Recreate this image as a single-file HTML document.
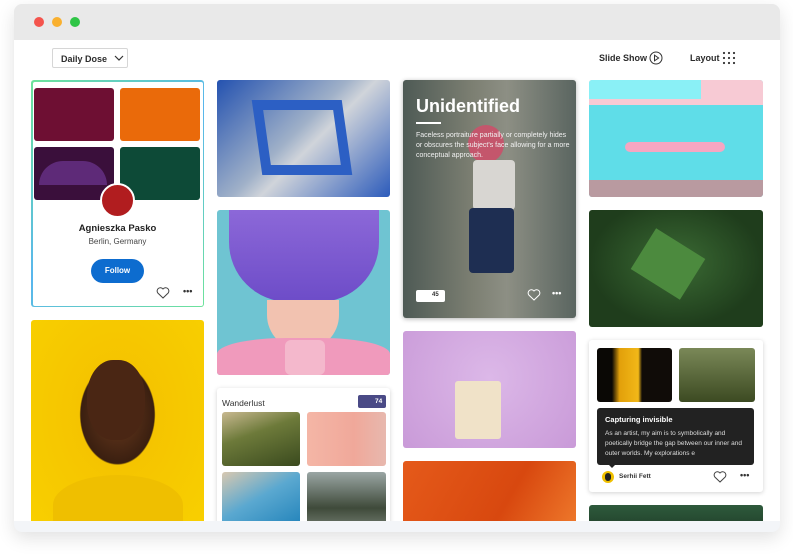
<!DOCTYPE html>
<html><head><style>
*{margin:0;padding:0;box-sizing:border-box}
body{width:793px;height:556px;background:#fff;font-family:"Liberation Sans",sans-serif;position:relative;overflow:hidden}
.win{position:absolute;left:14px;top:4px;width:766px;height:528px;border-radius:8px;background:#f3f5f8;box-shadow:0 6px 18px rgba(0,0,0,.12);overflow:hidden}
.bar{position:absolute;left:0;top:0;width:100%;height:36px;background:#e9e9e9}
.dot{position:absolute;top:13px;width:10px;height:10px;border-radius:50%}
.content{position:absolute;left:0;top:36px;width:766px;height:481px;background:#fff;overflow:hidden}
.a{position:absolute}
.img{position:absolute;border-radius:3px;overflow:hidden}
.card{position:absolute;background:#fff;border-radius:3px;box-shadow:0 1px 5px rgba(0,0,0,.18)}
</style></head><body>
<div class="win">
<div class="bar"><div class="dot" style="left:20px;background:#f4544d"></div><div class="dot" style="left:38px;background:#f9b02f"></div><div class="dot" style="left:56px;background:#2fc546"></div></div>
<div class="content">
<!-- toolbar (content coords: x-14, y-40) -->
<div class="a" style="left:38px;top:8px;width:76px;height:20px;border:1px solid #d6d6d6;border-radius:2px;font-size:9px;font-weight:bold;color:#2c2c2c;padding:5px 0 0 8px">Daily Dose <svg width="10" height="7" style="margin-left:4px" viewBox="0 0 10 7"><path d="M1 1l4 4 4-4" fill="none" stroke="#333" stroke-width="1.2"/></svg></div>
<div class="a" style="left:585px;top:13px;font-size:9px;font-weight:bold;color:#2c2c2c">Slide Show</div>
<svg class="a" style="left:635px;top:11px" width="14" height="14" viewBox="0 0 14 14"><circle cx="7" cy="7" r="6" fill="none" stroke="#333" stroke-width="1"/><path d="M5.5 4.2v5.6L9.6 7z" fill="none" stroke="#333"/></svg>
<div class="a" style="left:676px;top:13px;font-size:9px;font-weight:bold;color:#2c2c2c">Layout</div>
<svg class="a" style="left:708px;top:11px" width="14" height="14" viewBox="0 0 14 14" fill="#333"><circle cx="2" cy="2" r="1.1"/><circle cx="7" cy="2" r="1.1"/><circle cx="12" cy="2" r="1.1"/><circle cx="2" cy="7" r="1.1"/><circle cx="7" cy="7" r="1.1"/><circle cx="12" cy="7" r="1.1"/><circle cx="2" cy="12" r="1.1"/><circle cx="7" cy="12" r="1.1"/><circle cx="12" cy="12" r="1.1"/></svg>

<!-- col1 profile card -->
<div class="a" style="left:17px;top:40px;width:173px;height:227px;border-radius:3px;background:linear-gradient(135deg,#6de39a,#58b6ee 50%,#6de39a);padding:1.5px"><div style="width:100%;height:100%;background:#fff;border-radius:2px"></div></div>
<div class="img" style="left:20px;top:48px;width:80px;height:53px;background:#6e0f33"></div>
<div class="img" style="left:106px;top:48px;width:80px;height:53px;background:#ea6a0a"></div>
<div class="img" style="left:20px;top:107px;width:80px;height:53px;background:#3a0f3b"><div style="position:absolute;left:5px;top:14px;width:68px;height:24px;border-radius:34px 34px 0 0;background:#5e2a78"></div></div>
<div class="img" style="left:106px;top:107px;width:80px;height:53px;background:#0d4a37"></div>
<div class="a" style="left:86px;top:143px;width:35px;height:35px;border-radius:50%;background:#b11d1f;border:2px solid #fff"></div>
<div class="a" style="left:17px;top:183px;width:173px;text-align:center;font-size:9.5px;font-weight:bold;color:#222">Agnieszka Pasko</div>
<div class="a" style="left:17px;top:197px;width:173px;text-align:center;font-size:8px;color:#444">Berlin, Germany</div>
<div class="a" style="left:77px;top:219px;width:53px;height:24px;border-radius:12px;background:#0d6ccf;color:#fff;font-size:8px;font-weight:bold;text-align:center;line-height:24px">Follow</div>
<svg class="a" style="left:142px;top:247px" width="14" height="12" viewBox="0 0 14 12"><path d="M7 11L1.8 6A3 3 0 0 1 7 2a3 3 0 0 1 5.2 4z" fill="none" stroke="#444" stroke-width="1"/></svg>
<div class="a" style="left:169px;top:246px;font-size:9px;font-weight:bold;color:#333">•••</div>
<div class="img" style="left:17px;top:280px;width:173px;height:210px;background:radial-gradient(ellipse at 50% 45%,#6a3a1e 0,#3a1f10 30%,#f5c400 31%,#f8d000 100%)"><div style="position:absolute;left:56px;top:40px;width:58px;height:80px;border-radius:45%;background:#4a2614"></div><div style="position:absolute;left:22px;top:155px;width:130px;height:60px;background:#efbf00;border-radius:50% 50% 0 0"></div></div>

<!-- col2 -->
<div class="img" style="left:203px;top:40px;width:173px;height:117px;background:linear-gradient(135deg,#2452b0,#9fb0c8 45%,#d0d4da 55%,#2c5bbb)"><div style="position:absolute;left:40px;top:20px;width:90px;height:75px;border:10px solid #2c5fc4;transform:skew(8deg)"></div></div>
<div class="img" style="left:203px;top:170px;width:173px;height:165px;background:#6fc4d2"><div style="position:absolute;left:12px;top:0;width:150px;height:92px;border-radius:0 0 60px 60px;background:linear-gradient(#8c68d8,#6d4cc8)"></div><div style="position:absolute;left:50px;top:90px;width:72px;height:50px;background:#f2c2b0;border-radius:0 0 35px 35px"></div><div style="position:absolute;left:0;top:128px;width:173px;height:40px;background:#f09abc;border-radius:40% 40% 0 0"></div><div style="position:absolute;left:68px;top:130px;width:40px;height:35px;background:#f4b8cc;border-radius:6px"></div></div>
<div class="card" style="left:203px;top:348px;width:173px;height:150px">
<div class="a" style="left:5px;top:10px;font-size:8.5px;color:#333">Wanderlust</div>
<div class="a" style="left:141px;top:7px;width:28px;height:13px;background:#4a4a86;border-radius:2px;color:#fff;font-size:6.5px;font-weight:bold;padding:3px 0 0 17px">74</div>
<div class="img" style="left:5px;top:24px;width:78px;height:54px;background:linear-gradient(160deg,#c8b890,#6d7a3a 40%,#3a4a1e)"></div>
<div class="img" style="left:90px;top:24px;width:79px;height:54px;background:linear-gradient(90deg,#f4b6a6,#f0a89a 60%,#e7b8ae)"></div>
<div class="img" style="left:5px;top:84px;width:78px;height:60px;background:linear-gradient(150deg,#d8c8b0,#5aa8d0 45%,#1c7fb8)"></div>
<div class="img" style="left:90px;top:84px;width:79px;height:60px;background:linear-gradient(#9aa6a4,#3f4a3a 60%,#7a8478)"></div>
</div>

<!-- col3 -->
<div class="img" style="left:389px;top:40px;width:173px;height:238px;background:linear-gradient(90deg,#4e5a55,#7c7f72 40%,#8d8f84 60%,#5a6560);box-shadow:0 1px 5px rgba(0,0,0,.3)">
<div style="position:absolute;left:65px;top:45px;width:36px;height:38px;border-radius:50%;background:#c4566c"></div>
<div style="position:absolute;left:70px;top:80px;width:42px;height:50px;background:#d8d6d2;border-radius:4px"></div>
<div style="position:absolute;left:66px;top:128px;width:45px;height:65px;background:#1e2e52;border-radius:4px"></div>
<div style="position:absolute;left:13px;top:16px;font-size:18px;font-weight:bold;color:#fff">Unidentified</div>
<div style="position:absolute;left:13px;top:42px;width:25px;height:2px;background:#fff"></div>
<div style="position:absolute;left:13px;top:51px;width:155px;font-size:7px;line-height:10px;color:#f0f0f0">Faceless portraiture partially or completely hides or obscures the subject's face allowing for a more conceptual approach.</div>
<div style="position:absolute;left:13px;top:210px;width:29px;height:12px;background:#fff;border-radius:2px;font-size:6px;font-weight:bold;color:#333;padding:2px 0 0 16px">45</div>
<svg style="position:absolute;left:124px;top:209px" width="14" height="12" viewBox="0 0 14 12"><path d="M7 11L1.8 6A3 3 0 0 1 7 2a3 3 0 0 1 5.2 4z" fill="none" stroke="#fff" stroke-width="1"/></svg>
<div style="position:absolute;left:149px;top:208px;font-size:9px;font-weight:bold;color:#fff">•••</div>
</div>
<div class="img" style="left:389px;top:291px;width:173px;height:117px;background:radial-gradient(circle at 50% 40%,#dcb8e8,#c99ad8)"><div style="position:absolute;left:52px;top:50px;width:46px;height:58px;background:#f0e2c8;border-radius:3px"></div></div>
<div class="img" style="left:389px;top:421px;width:173px;height:70px;background:linear-gradient(120deg,#e55a1a,#d8480f 60%,#ef7a2c)"></div>

<!-- col4 -->
<div class="img" style="left:575px;top:40px;width:174px;height:117px;background:#5fdde8"><div style="position:absolute;left:0;top:0;width:174px;height:25px;background:#f7cad4"></div><div style="position:absolute;left:0;top:0;width:112px;height:19px;background:#8af0f6"></div><div style="position:absolute;left:0;top:100px;width:174px;height:17px;background:#b99aa0"></div><div style="position:absolute;left:36px;top:62px;width:100px;height:10px;background:#f5a6c2;border-radius:5px"></div></div>
<div class="img" style="left:575px;top:170px;width:174px;height:117px;background:radial-gradient(ellipse at 50% 45%,#3b6b34,#1f3d1c 70%)"><div style="position:absolute;left:50px;top:30px;width:58px;height:48px;background:#4c8a3e;transform:rotate(32deg)"></div></div>
<div class="card" style="left:575px;top:300px;width:174px;height:152px">
<div class="img" style="left:8px;top:8px;width:75px;height:54px;background:linear-gradient(90deg,#0a0805 20%,#e2a00a 30%,#f2b818 55%,#100c08 60%)"></div>
<div class="img" style="left:90px;top:8px;width:76px;height:54px;background:linear-gradient(#7a8858,#3c4a22)"></div>
<div class="a" style="left:8px;top:68px;width:157px;height:57px;background:#222;border-radius:3px;padding:7px 8px">
<div style="font-size:7.5px;font-weight:bold;color:#fff;margin-bottom:5px">Capturing invisible</div>
<div style="font-size:6.5px;line-height:10px;color:#ddd;height:30px;overflow:hidden">As an artist, my aim is to symbolically and poetically bridge the gap between our inner and outer worlds. My explorations e</div></div>
<div class="a" style="left:19px;top:124px;width:0;height:0;border-left:4px solid transparent;border-right:4px solid transparent;border-top:4px solid #222"></div>
<div class="a" style="left:13px;top:131px;width:12px;height:12px;border-radius:50%;background:#f0c000"><div style="margin:2px auto;width:6px;height:8px;background:#222;border-radius:3px"></div></div>
<div class="a" style="left:30px;top:133px;font-size:6.5px;font-weight:bold;color:#333">Serhii Fett</div>
<svg class="a" style="left:124px;top:131px" width="14" height="12" viewBox="0 0 14 12"><path d="M7 11L1.8 6A3 3 0 0 1 7 2a3 3 0 0 1 5.2 4z" fill="none" stroke="#444" stroke-width="1"/></svg>
<div class="a" style="left:151px;top:130px;font-size:9px;font-weight:bold;color:#333">•••</div>
</div>
<div class="img" style="left:575px;top:465px;width:174px;height:30px;background:linear-gradient(#2e5a3c,#1e3a26)"></div>
</div>
</div>
</body></html>
